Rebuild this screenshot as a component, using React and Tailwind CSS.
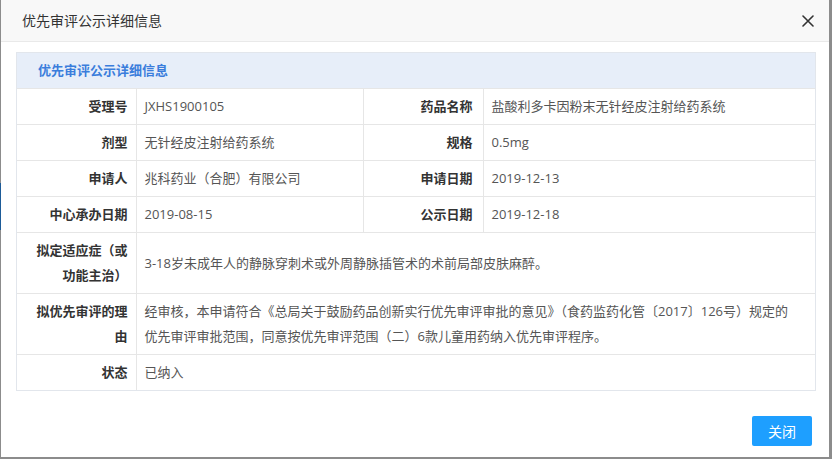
import React from 'react';

// 优先审评公示详细信息 弹窗
const ROWS = [
  [['受理号', 'JXHS1900105'], ['药品名称', '盐酸利多卡因粉末无针经皮注射给药系统']],
  [['剂型', '无针经皮注射给药系统'], ['规格', '0.5mg']],
  [['申请人', '兆科药业（合肥）有限公司'], ['申请日期', '2019-12-13']],
  [['中心承办日期', '2019-08-15'], ['公示日期', '2019-12-18']],
];

const labelCls = 'border-t border-r border-[#e6e6e6] pl-[14px] pr-[8px] py-[5px] leading-[25px] text-right font-bold text-[#333] align-middle';
const valueCls = 'border-t border-[#e6e6e6] pl-[8px] pr-[8px] py-[5px] leading-[25px] text-[#555] align-middle';

const App = () => {
  return (
    <div
      className="w-[832px] h-[459px] bg-[#8c8c8c] flex overflow-hidden"
      style={{ fontFamily: '"Open Sans", "Noto Sans CJK SC", sans-serif' }}
    >
      {/* 背景遮罩边缘 */}
      <div className="w-[1px] flex flex-col shrink-0">
        <div className="h-[183px] bg-[#8c8c8c]" />
        <div className="h-[47px] bg-[#1d5b98]" />
      </div>

      <div className="w-[828px] h-[457px] bg-white flex flex-col shrink-0">
        {/* 标题栏 */}
        <div className="h-[42px] bg-[#f8f8f8] border-b border-[#e9e9e9] flex items-center justify-between pl-[21px] pr-[15px] shrink-0">
          <span className="text-[14px] text-[#333]">优先审评公示详细信息</span>
          <svg width="12" height="12" viewBox="0 0 12 12" className="text-[#333]">
            <path d="M1 1 L11 11 M11 1 L1 11" stroke="currentColor" strokeWidth="1.6" strokeLinecap="round" />
          </svg>
        </div>

        {/* 内容 */}
        <div className="pt-[10px] pl-[15px]">
          <div className="w-[800px] border border-[#e2e6ec]">
            <div className="h-[35px] bg-[#e7eef9] flex items-center pl-[21px] text-[13px] font-bold text-[#3a7ddc]">
              优先审评公示详细信息
            </div>
            <table className="w-full table-fixed border-collapse text-[13px]">
              <colgroup>
                <col className="w-[119px]" />
                <col className="w-[227px]" />
                <col className="w-[120px]" />
                <col />
              </colgroup>
              <tbody>
                {ROWS.map((row, i) => (
                  <tr key={i}>
                    <td className={labelCls}>{row[0][0]}</td>
                    <td className={`${valueCls} border-r`}>{row[0][1]}</td>
                    <td className={`${labelCls} !pr-[10px]`}>{row[1][0]}</td>
                    <td className={valueCls}>{row[1][1]}</td>
                  </tr>
                ))}
                <tr>
                  <td className={labelCls}>拟定适应症（或功能主治）</td>
                  <td colSpan={3} className={valueCls}>3-18岁未成年人的静脉穿刺术或外周静脉插管术的术前局部皮肤麻醉。</td>
                </tr>
                <tr>
                  <td className={labelCls}>拟优先审评的理由</td>
                  <td colSpan={3} className={valueCls}>
                    经审核，本申请符合《总局关于鼓励药品创新实行优先审评审批的意见》（食药监药化管〔2017〕126号）规定的
                    <br />
                    优先审评审批范围，同意按优先审评范围（二）6款儿童用药纳入优先审评程序。
                  </td>
                </tr>
                <tr>
                  <td className={labelCls}>状态</td>
                  <td colSpan={3} className={valueCls}>已纳入</td>
                </tr>
              </tbody>
            </table>
          </div>
        </div>

        {/* 底部按钮 */}
        <div className="flex justify-end pr-[17px] pt-[25px]">
          <button className="w-[60px] h-[30px] bg-[#1e9fff] rounded-[2px] text-white text-[14px]">关闭</button>
        </div>
      </div>
    </div>
  );
};

export default App;
